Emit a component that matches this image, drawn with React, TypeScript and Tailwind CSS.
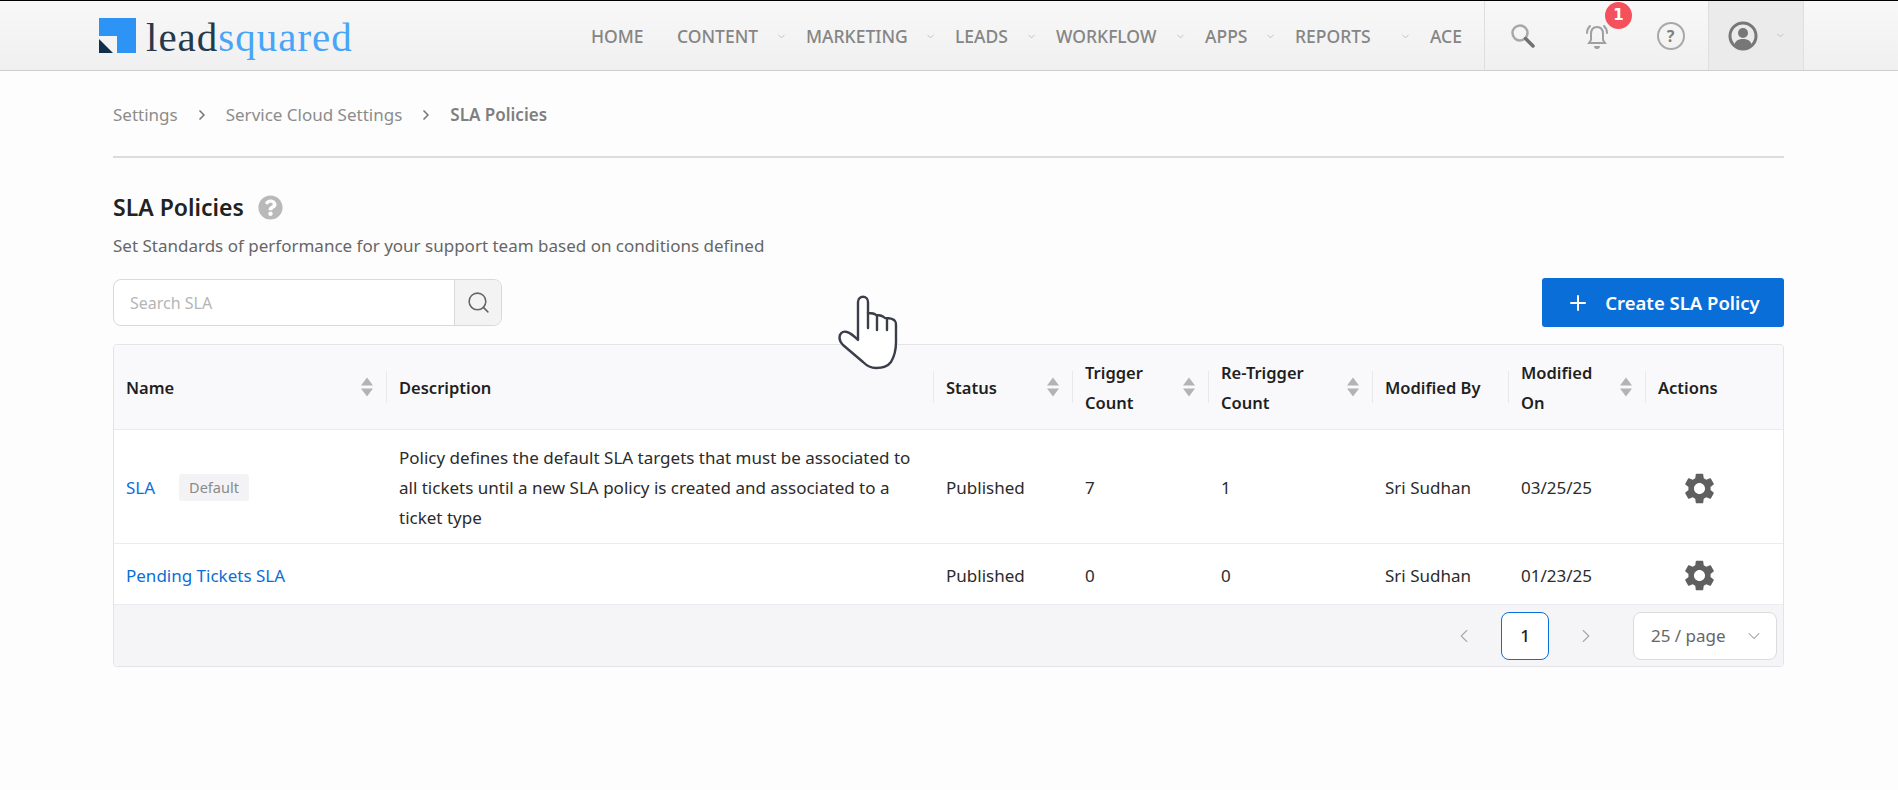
import { ChevronDown, ChevronLeft, ChevronRight, Plus, Search } from 'lucide-react'
import { FaQuestionCircle } from 'react-icons/fa'
import { MdSettings } from 'react-icons/md'

const navItems = [
  { label: 'HOME', width: 'w-[86px]', caret: false },
  { label: 'CONTENT', width: 'w-[129px]', caret: true },
  { label: 'MARKETING', width: 'w-[149px]', caret: true },
  { label: 'LEADS', width: 'w-[101px]', caret: true },
  { label: 'WORKFLOW', width: 'w-[149px]', caret: true },
  { label: 'APPS', width: 'w-[90px]', caret: true },
  { label: 'REPORTS', width: 'w-[135px]', caret: true },
  { label: 'ACE', width: 'w-[54px]', caret: false },
]

function SortArrows() {
  return (
    <svg width="14" height="22" viewBox="0 0 14 22" className="shrink-0 text-[#b3b3b3]" fill="currentColor">
      <path d="M7 1.5 13 9.5H1Z" />
      <path d="M1 12.5H13L7 20.5Z" />
    </svg>
  )
}

function HeaderCell({ lines, sortable, last }: { lines: string[]; sortable?: boolean; last?: boolean }) {
  return (
    <th className="relative h-[84px] pl-[12px] pr-[13px] text-left align-middle text-[16.5px] font-semibold text-[#1f1f1f]">
      <div className="flex items-center justify-between">
        <span className="pt-[3px] leading-[30px]">
          {lines.map((line) => (
            <span key={line} className="block">
              {line}
            </span>
          ))}
        </span>
        {sortable && <SortArrows />}
      </div>
      {!last && <span className="absolute right-0 top-[26px] h-[32px] w-px bg-[#e8e8ea]" />}
    </th>
  )
}

function HandCursor() {
  return (
    <svg
      width="60"
      height="76"
      viewBox="0 0 60 76"
      className="absolute left-[838px] top-[295px]"
      fill="#fff"
      stroke="#3a3e49"
      strokeWidth="2.4"
      strokeLinejoin="round"
      strokeLinecap="round"
    >
      <path d="M20 45V7c0-7 10-7 10 0v11c3 0 6 0 8 2 3 0 7 1 9 3 4 0 8 0 10 3 1 1 1 2 1 4v17c0 9-2 15-5 20-3 4-9 6-15 6-5 0-9-2-13-6L5 50c-3-3-4-7-3-10 1-3 4-4 7-3 4 1 8 5 11 8Z" />
      <path d="M30 18v15M39 21v14M49 25v10" fill="none" />
    </svg>
  )
}

export default function App() {
  const cell = 'pl-[12px] pr-[13px] pt-[3px]'
  return (
    <div className="relative min-h-[790px] bg-[#fdfdfd] font-['Noto_Sans',sans-serif] text-[17px] text-[#2b2b2b]">
      <header className="flex h-[71px] items-stretch border-t border-b border-t-black border-b-[#cfcfcf] bg-gradient-to-b from-[#f8f8f8] to-[#f0f0f0]">
        <div className="ml-[99px] flex items-center gap-[10px]">
          <div className="relative h-[35px] w-[37px] bg-[#2d94f5]">
            <div className="absolute bottom-0 left-0 h-[17px] w-[18px] bg-[#f4f4f4]" />
            <svg width="14" height="14" viewBox="0 0 14 14" className="absolute bottom-0 left-0">
              <path d="M0 0 14 14H0Z" fill="#12304a" />
            </svg>
          </div>
          <span className="pt-[3px] font-['Liberation_Serif',serif] text-[41px] leading-none tracking-[1px]">
            <span className="text-[#25394d]">lead</span>
            <span className="text-[#48a5f7]">squared</span>
          </span>
        </div>

        <nav className="ml-auto flex items-center pt-[1px]">
          {navItems.map((item) => (
            <div
              key={item.label}
              className={`flex ${item.width} items-center text-[17.5px] font-medium text-[#858585]`}
            >
              <span>{item.label}</span>
              {item.caret && <ChevronDown size={11} className="ml-auto mr-[19px] text-[#bcbcbc]" strokeWidth={2} />}
            </div>
          ))}
        </nav>

        <div className="flex items-center border-l border-[#dedede]">
          <div className="flex w-[76px] justify-center">
            <svg width="26" height="26" viewBox="0 0 26 26" fill="none">
              <circle cx="10" cy="10" r="7.5" stroke="#a8a8a8" strokeWidth="2.5" />
              <path d="M15.5 15.5 23 23" stroke="#707070" strokeWidth="3.5" strokeLinecap="round" />
            </svg>
          </div>
          <div className="relative flex w-[72px] justify-center">
            <svg width="28" height="30" viewBox="0 0 28 30" fill="none" stroke="#a0a0a0" strokeWidth="2">
              <path d="M14 6c-4 0-6 3-6 7v6l-2 3h16l-2-3v-6c0-4-2-7-6-7Z" />
              <path d="M12 25a2 2 0 0 0 4 0" fill="#a0a0a0" />
              <path d="M4 12c0-3 1-5 3-7M24 12c0-3-1-5-3-7" strokeLinecap="round" />
            </svg>
            <span className="absolute left-[44px] top-[-19px] flex size-[27px] items-center justify-center rounded-full bg-[#f4515c] font-['DejaVu_Sans',sans-serif] text-[15px] font-bold text-white">
              1
            </span>
          </div>
          <div className="flex w-[75px] justify-center">
            <span className="flex size-[28px] items-center justify-center rounded-full border-[2.5px] border-[#a8a8a8] text-[16px] font-bold text-[#7e7e7e]">
              ?
            </span>
          </div>
          <div className="flex h-full w-[96px] items-center border-x border-[#dedede] bg-[#ebebeb] pl-[19px]">
            <svg width="30" height="30" viewBox="0 0 30 30">
              <circle cx="15" cy="15" r="13" fill="none" stroke="#777" strokeWidth="3" />
              <circle cx="15" cy="12" r="5" fill="#777" />
              <path d="M6 25c1-6 5-7 9-7s8 1 9 7c-5 4-13 4-18 0Z" fill="#777" />
            </svg>
            <ChevronDown size={11} className="ml-[17px] text-[#bcbcbc]" strokeWidth={2} />
          </div>
          <div className="w-[94px]" />
        </div>
      </header>

      <main className="ml-[113px] w-[1671px]">
        <div className="flex h-[87px] items-center border-b-2 border-[#dcdcdc] pt-[2px] text-[#8c8c8c]">
          <span>Settings</span>
          <ChevronRight size={16} className="mx-[16px] text-[#777]" strokeWidth={2.5} />
          <span>Service Cloud Settings</span>
          <ChevronRight size={16} className="mx-[16px] text-[#777]" strokeWidth={2.5} />
          <span className="font-semibold text-[#7f7f7f]">SLA Policies</span>
        </div>

        <div className="mt-[32px] flex items-center gap-[14px]">
          <h1 className="text-[23px] font-semibold leading-[34px] text-[#222]">SLA Policies</h1>
          <FaQuestionCircle size={25} className="text-[#b9b9b9]" />
        </div>
        <p className="mt-[10px] leading-[24px] text-[#666]">
          Set Standards of performance for your support team based on conditions defined
        </p>

        <div className="mt-[20px] flex items-center justify-between">
          <div className="flex h-[47px] w-[389px] overflow-hidden rounded-[8px] border border-[#d9d9d9] bg-white">
            <span className="flex flex-1 items-center pl-[16px] pt-[1px] text-[16px] text-[#b5b5b5]">Search SLA</span>
            <span className="flex w-[47px] items-center justify-center border-l border-[#d9d9d9] bg-[#f3f3f3]">
              <Search size={25} strokeWidth={1.5} className="text-[#666]" />
            </span>
          </div>
          <button className="flex h-[49px] w-[242px] items-center justify-center gap-[15px] rounded-[3px] bg-[#0a6ed9] text-[18.5px] font-semibold text-white">
            <Plus size={24} strokeWidth={2} />
            Create SLA Policy
          </button>
        </div>

        <div className="mt-[17px] overflow-hidden rounded-[4px] border border-[#e3e3e8]">
          <table className="w-full table-fixed border-collapse">
            <colgroup>
              <col className="w-[273px]" />
              <col className="w-[547px]" />
              <col className="w-[139px]" />
              <col className="w-[136px]" />
              <col className="w-[164px]" />
              <col className="w-[136px]" />
              <col className="w-[137px]" />
              <col />
            </colgroup>
            <thead className="bg-[#f9f9fb]">
              <tr className="border-b border-[#ececf0]">
                <HeaderCell lines={['Name']} sortable />
                <HeaderCell lines={['Description']} />
                <HeaderCell lines={['Status']} sortable />
                <HeaderCell lines={['Trigger', 'Count']} sortable />
                <HeaderCell lines={['Re-Trigger', 'Count']} sortable />
                <HeaderCell lines={['Modified By']} />
                <HeaderCell lines={['Modified', 'On']} sortable />
                <HeaderCell lines={['Actions']} last />
              </tr>
            </thead>
            <tbody className="bg-white">
              <tr className="border-b border-[#ececf0]">
                <td className={`h-[114px] ${cell}`}>
                  <div className="flex items-center gap-[24px]">
                    <a className="text-[#0a6ed9]">SLA</a>
                    <span className="rounded-[3px] bg-[#f3f3f5] px-[10px] py-[3px] text-[14.5px] text-[#8a8a8a]">
                      Default
                    </span>
                  </div>
                </td>
                <td className={`${cell} leading-[30px]`}>
                  Policy defines the default SLA targets that must be associated to all tickets until a new SLA policy
                  is created and associated to a ticket type
                </td>
                <td className={cell}>Published</td>
                <td className={cell}>7</td>
                <td className={cell}>1</td>
                <td className={cell}>Sri Sudhan</td>
                <td className={cell}>03/25/25</td>
                <td className={cell}>
                  <MdSettings size={37} className="ml-[23px] mt-[1px] text-[#5f5f5f]" />
                </td>
              </tr>
              <tr>
                <td className={`h-[61px] whitespace-nowrap ${cell}`}>
                  <a className="text-[#0a6ed9]">Pending Tickets SLA</a>
                </td>
                <td />
                <td className={cell}>Published</td>
                <td className={cell}>0</td>
                <td className={cell}>0</td>
                <td className={cell}>Sri Sudhan</td>
                <td className={cell}>01/23/25</td>
                <td className={cell}>
                  <MdSettings size={37} className="ml-[23px] mt-[1px] text-[#5f5f5f]" />
                </td>
              </tr>
            </tbody>
          </table>
          <div className="flex h-[62px] items-center justify-end border-t border-[#ececf0] bg-[#f5f5f7] pr-[6px]">
            <ChevronLeft size={22} strokeWidth={1.25} className="text-[#a8a8a8]" />
            <span className="mx-[26px] flex h-[48px] w-[48px] items-center justify-center rounded-[8px] border border-[#0a6ed9] bg-white text-[17px] font-medium text-[#222]">
              1
            </span>
            <ChevronRight size={22} strokeWidth={1.25} className="text-[#a8a8a8]" />
            <span className="ml-[36px] flex h-[48px] w-[144px] items-center justify-between rounded-[8px] border border-[#dcdcdc] bg-white pl-[17px] pr-[12px] text-[#666]">
              25 / page
              <ChevronDown size={20} strokeWidth={1.25} className="text-[#999]" />
            </span>
          </div>
        </div>
      </main>

      <HandCursor />
    </div>
  )
}
